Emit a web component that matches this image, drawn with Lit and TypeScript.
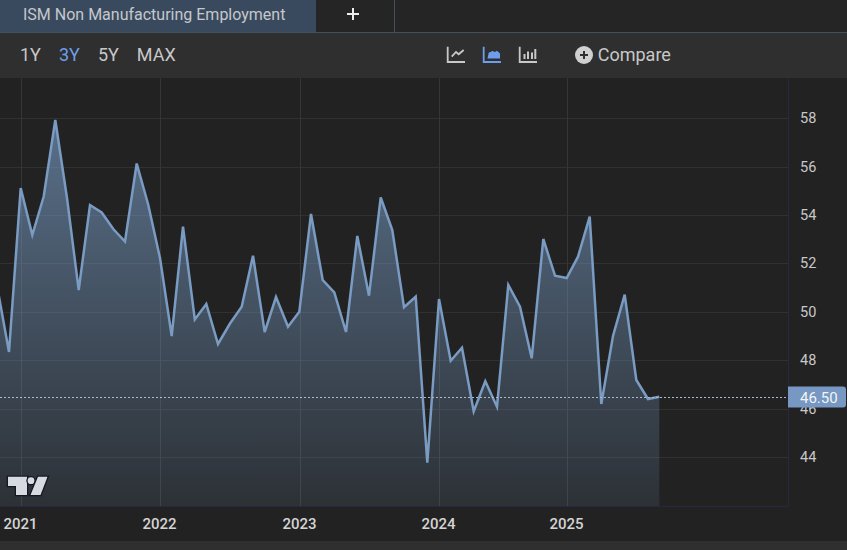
import { LitElement, html, svg, css } from 'lit'
import { customElement } from 'lit/decorators.js'

// line points in page pixels, one per month
const points: [number, number][] = [
  [-2.6, 288], [9, 352], [20.7, 188], [32.3, 235], [43.7, 196.5], [55.3, 120], [67, 198], [78.7, 290],
  [90, 205], [101.7, 212.5], [113.3, 229], [125, 241.5], [136.7, 163.5], [148.3, 205], [160, 258],
  [171.7, 336], [183, 226.7], [194.8, 319.5], [206.3, 304], [218, 344], [230, 323.5], [241.7, 306.7],
  [253, 255.7], [264.7, 332], [276, 297], [288, 326.7], [299.3, 311.7], [311, 214], [322.7, 280],
  [334.3, 292.3], [346, 332], [357.3, 236], [369, 295.7], [380.7, 197.5], [392.3, 230], [404, 307.3],
  [415.7, 296.7], [427.3, 462.7], [439, 299], [450.7, 360.7], [462, 347.7], [473.7, 411.3],
  [485.3, 381.3], [497, 406.7], [508.3, 285], [520, 306.7], [531.7, 358.3], [543.3, 239], [555, 275.7],
  [566.7, 278], [578, 256.7], [589.7, 216.7], [601.3, 404], [613, 336], [624.7, 294.7], [636.3, 380],
  [648, 399], [659.3, 396.7],
]

const yTicks = [
  { label: '58', y: 118.5 },
  { label: '56', y: 167.5 },
  { label: '54', y: 215.5 },
  { label: '52', y: 263.5 },
  { label: '50', y: 312.5 },
  { label: '48', y: 360.5 },
  { label: '46', y: 409.5 },
  { label: '44', y: 457.5 },
]

const xTicks = [
  { label: '2021', x: 21.5 },
  { label: '2022', x: 160.5 },
  { label: '2023', x: 300.5 },
  { label: '2024', x: 439.5 },
  { label: '2025', x: 567.5 },
]

const linePath = points.map(p => p.join(',')).join(' ')
const areaPath = `${linePath} 659.3,506 -2.6,506`

@customElement('app-root')
export class AppRoot extends LitElement {
  static styles = css`
    :host {
      display: flex;
      flex-direction: column;
      width: 847px;
      height: 550px;
      overflow: hidden;
      background: #222222;
      font-family: Roboto, sans-serif;
      color: #c8c8c8;
    }

    .tabs {
      display: flex;
      height: 32px;
      background: #252525;
      border-bottom: 1px solid #46505c;
    }

    .tab {
      display: flex;
      align-items: center;
      width: 293px;
      padding: 0 0 4px 23px;
      background: #3a4a5e;
      color: #c4c8cc;
      font-size: 16px;
      white-space: nowrap;
    }

    .add {
      width: 79px;
      padding-bottom: 4px;
      padding-right: 5px;
      box-sizing: border-box;
      display: flex;
      align-items: center;
      justify-content: center;
      border-right: 1px solid #46505c;
    }

    .toolbar {
      display: flex;
      align-items: center;
      height: 43px;
      padding: 0 0 2px 20px;
      background: #2f2f2f;
      font-size: 18px;
    }

    .ranges {
      display: flex;
      gap: 18px;
    }

    .active {
      color: #6d9eeb;
    }

    .icons {
      display: flex;
      gap: 16px;
      margin-left: 270px;
    }

    .icons svg {
      display: block;
    }

    .compare {
      display: flex;
      align-items: center;
      gap: 5px;
      margin-left: 37px;
    }

    .chart {
      display: block;
      flex: 1;
      min-height: 0;
    }

    .axis-y {
      font-size: 14.5px;
      fill: #c8c8c8;
    }

    .axis-x {
      font-size: 15px;
      font-weight: 500;
      fill: #d4d4d4;
      text-anchor: middle;
    }

    .price {
      font-size: 15px;
      fill: #f2f4f7;
    }

    .footer {
      height: 9px;
      background: #2f2f2f;
    }
  `

  private chartIcon(color: string, inner: unknown) {
    return html`<svg width="20" height="20" viewBox="446 44 20 20" fill="none">
      <path d="M447.7 45.7V61H465" stroke=${color} stroke-width="1.8" />
      ${inner}
    </svg>`
  }

  private renderChart() {
    return html`<svg class="chart" width="847" height="463" viewBox="0 78 847 463">
      <defs>
        <linearGradient id="area" gradientUnits="userSpaceOnUse" x1="0" y1="120" x2="0" y2="506">
          <stop offset="0" stop-color="#7a9fc9" stop-opacity="0.62" />
          <stop offset="1" stop-color="#7a9fc9" stop-opacity="0.12" />
        </linearGradient>
      </defs>

      ${yTicks.map(t => svg`<line x1="0" x2="788" y1=${t.y} y2=${t.y} stroke="#313131" />`)}
      ${xTicks.map(t => svg`<line x1=${t.x} x2=${t.x} y1="78" y2="506" stroke="#363636" />`)}

      <polygon points=${areaPath} fill="url(#area)" />

      <path d="M0 506.5H788.5V78" fill="none" stroke="#2a2640" />

      <polyline points=${linePath} fill="none" stroke="#7a9bc2" stroke-width="2.5" stroke-linejoin="miter" />
      <line x1="0" x2="788" y1="397.5" y2="397.5" stroke="#a9bbd0" stroke-dasharray="2 2" />

      ${yTicks.map(t => svg`<text class="axis-y" x="800" y=${t.y + 4.5}>${t.label}</text>`)}
      ${xTicks.map(t => svg`<text class="axis-x" x=${t.x - 1} y="529">${t.label}</text>`)}

      <path d="M788 386.5H843a3 3 0 0 1 3 3V404.500a3 3 0 0 1 -3 3H788Z" fill="#7698c2" />
      <text class="price" x="800" y="402.500">46.50</text>

      <g fill="#d8dae2" stroke="#141824" stroke-width="2.6" paint-order="stroke" stroke-linejoin="miter">
        <path d="M8 476.700H27V495H16V486H8Z" />
        <circle cx="31" cy="480.700" r="3.400" />
        <path d="M38 476.700H47.500L40.500 495H30.500Z" />
      </g>
    </svg>`
  }

  render() {
    return html`
      <div class="tabs">
        <div class="tab">ISM Non Manufacturing Employment</div>
        <div class="add">
          <svg width="14" height="14" viewBox="0 0 14 14">
            <path d="M7 1V13M1 7H13" stroke="#eeeeee" stroke-width="2" />
          </svg>
        </div>
      </div>

      <div class="toolbar">
        <div class="ranges">
          <span>1Y</span>
          <span class="active">3Y</span>
          <span>5Y</span>
          <span>MAX</span>
        </div>

        <div class="icons">
          ${this.chartIcon('#c8c8c8', svg`
            <path d="M451.700 55.700L456 51L458.700 53.300L463.700 49" stroke="#c8c8c8" stroke-width="1.800" />
          `)}
          ${this.chartIcon('#6d9eeb', svg`
            <path d="M451.500 57.500L452.700 51.700L456.500 50L459 51L461 49.700L464 52.500V57.500Z" fill="#6d9eeb" />
          `)}
          ${this.chartIcon('#c8c8c8', svg`
            <path d="M452.500 53V58M456 50.500V58M460 51.500V58M463.300 48V58" stroke="#c8c8c8" stroke-width="2" />
          `)}
        </div>

        <div class="compare">
          <svg width="18" height="18" viewBox="0 0 18 18">
            <circle cx="9" cy="9" r="9" fill="#d0d0d0" />
            <path d="M9 5V13M5 9H13" stroke="#2f2f2f" stroke-width="2" />
          </svg>
          <span>Compare</span>
        </div>
      </div>

      ${this.renderChart()}

      <div class="footer"></div>
    `
  }
}
